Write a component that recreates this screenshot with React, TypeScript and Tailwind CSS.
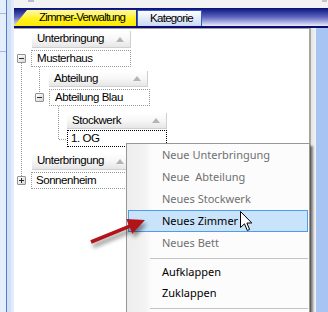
import React from 'react';

type HeaderProps = { label: string; className: string };

function ColumnHeader({ label, className }: HeaderProps) {
  return (
    <div
      className={`flex items-center justify-between pl-[5px] pr-[6px] bg-linear-to-b from-white via-[#f7f7f7] to-[#e6e6e6] border-b border-r border-[#d0d0d0] text-[11.5px] tracking-[-0.45px] text-black ${className}`}
    >
      <span>{label}</span>
      <svg width="8" height="5" viewBox="0 0 8 5" className="shrink-0">
        <path d="M0 5 L4 0 L8 5 Z" fill="#b4b4b4" />
      </svg>
    </div>
  );
}

function Expander({ open }: { open: boolean }) {
  return (
    <div className="relative w-[9px] h-[9px] border border-[#939393] bg-linear-to-br from-white to-[#d6d6d6] rounded-[1px] flex items-center justify-center shrink-0">
      <div className="w-[5px] h-px bg-[#2a2a2a]" />
      {!open && <div className="absolute w-px h-[5px] bg-[#2a2a2a]" />}
    </div>
  );
}

type MenuItemProps = { label: string; disabled?: boolean; active?: boolean; h?: string };

function MenuItem({ label, disabled, active, h = 'h-[22px]' }: MenuItemProps) {
  return (
    <div className={`${h} px-px flex`}>
      <div
        className={`flex-1 flex items-center pl-[33px] whitespace-pre ${
          active ? 'bg-[#c9e3fb] border border-[#4e9cee]' : 'border border-transparent'
        } ${disabled ? 'text-[#707070]' : 'text-black'}`}
      >
        {label}
      </div>
    </div>
  );
}

function Separator({ h }: { h: string }) {
  return (
    <div className={`${h} pl-[23px] pr-px`}>
      <div className="mt-[4px] h-px bg-[#c4c4c4]" />
    </div>
  );
}

export default function App() {
  return (
    <div className="relative w-[328px] h-[312px] overflow-hidden bg-white font-['Liberation_Sans',Arial,sans-serif] select-none">
      <div className="flex h-full">
        {/* left dock strip */}
        <div className="w-[14px] h-full flex shrink-0">
          <div className="w-[6px] h-full bg-[#e5eefb] flex flex-col">
            <div className="h-[13px]" />
            <div className="h-px bg-[#9fb9e4]" />
            <div className="h-[37px]" />
            <div className="h-px bg-[#9fb9e4]" />
          </div>
          <div className="w-px h-full bg-[#4f7fcf]" />
          <div className="w-[4px] h-full bg-[#d3e1f6]" />
          <div className="w-[3px] h-full bg-[#e2ebfa]" />
        </div>

        <div className="flex-1 flex flex-col">
          {/* top strip */}
          <div className="h-[8px] bg-[#f3f3f3] flex items-start">
            <div className="ml-[14px] w-[6px] h-[2px] bg-[#b8b8d8]" />
            <div className="ml-auto mr-[1px] w-[5px] h-[2px] bg-[#c4c4c4]" />
          </div>

          {/* tab strip */}
          <div className="h-[20px] bg-linear-to-b from-[#0a0a7a] via-[#5f63bd] to-[#eceef8] border-b-2 border-[#0b0b72] flex items-end">
            <div className="w-[123px] h-[16px] bg-linear-to-b from-[#fff9a0] via-[#fff21a] to-[#ffe900] border-r border-[#23307a] [clip-path:polygon(13px_0,100%_0,100%_100%,0_100%)] flex items-center pl-[25px] text-[11.5px] tracking-[-0.8px] text-black">
              Zimmer-Verwaltung
            </div>
            <div className="w-[65px] h-[16px] bg-linear-to-b from-white to-[#c9d8f3] border border-b-0 border-[#2f5ccb] flex items-center pl-[12px] text-[11.5px] tracking-[-0.7px] text-black">
              Kategorie
            </div>
          </div>

          <div className="flex-1 flex">
            {/* tree panel */}
            <div className="relative w-[297px] border-t border-[#a0a0a0] border-r-2 border-r-[#a6a6a6] bg-white flex flex-col">
              <svg className="absolute left-0 top-0 pointer-events-none" width="120" height="170">
                <g stroke="#9a9a9a" strokeWidth="1" strokeDasharray="1 1" shapeRendering="crispEdges" fill="none">
                  <line x1="7.5" y1="34" x2="7.5" y2="147" />
                  <line x1="25.5" y1="38" x2="25.5" y2="64" />
                  <polyline points="44.5,77 44.5,110.5 53,110.5" />
                </g>
              </svg>

              <ColumnHeader label="Unterbringung" className="mt-[2px] ml-[18px] w-[99px] h-[17px]" />
              <div className="mt-[2px] flex items-center">
                <div className="ml-[3px]">
                  <Expander open />
                </div>
                <div className="ml-[5px] w-[100px] h-[17px] border border-dotted border-[#9a9a9a] flex items-center pl-[5px] text-[11.5px] tracking-[-0.45px]">
                  Musterhaus
                </div>
              </div>

              <ColumnHeader label="Abteilung" className="mt-[4px] ml-[35px] w-[99px] h-[16px]" />
              <div className="mt-[2px] flex items-center">
                <div className="ml-[21px]">
                  <Expander open />
                </div>
                <div className="ml-[5px] w-[101px] h-[17px] border border-dotted border-[#9a9a9a] flex items-center pl-[5px] text-[11.5px] tracking-[-0.45px]">
                  Abteilung Blau
                </div>
              </div>

              <ColumnHeader label="Stockwerk" className="mt-[7px] ml-[53px] w-[100px] h-[16px]" />
              <div className="mt-px ml-[53px] w-[100px] h-[17px] border border-dotted border-black flex items-center pl-[3px] text-[11.5px] tracking-[-0.45px]">
                1. OG
              </div>

              <ColumnHeader label="Unterbringung" className="mt-[6px] ml-[18px] w-[99px] h-[17px]" />
              <div className="mt-[2px] flex items-center">
                <div className="ml-[3px]">
                  <Expander open={false} />
                </div>
                <div className="ml-[5px] w-[100px] h-[17px] border border-dotted border-[#9a9a9a] flex items-center pl-[4px] text-[11.5px] tracking-[-0.45px]">
                  Sonnenheim
                </div>
              </div>
            </div>
            <div className="w-[5px] bg-linear-to-r from-[#e4e4e4] to-[#f2f2f2]" />
            <div className="flex-1 bg-[#a8c4f2]" />
          </div>
        </div>
      </div>

      {/* context menu */}
      <div className="absolute left-[126px] top-[143px] w-[184px] h-[190px] border border-[#979797] bg-[linear-gradient(to_right,#ededed_0px,#f3f3f3_18px,#fcfcfc_25px)] shadow-[3px_3px_2px_rgba(0,0,0,0.45)] font-['Noto_Sans',sans-serif] text-[11px] flex flex-col">
        <MenuItem label="Neue Unterbringung" disabled />
        <MenuItem label="Neue  Abteilung" disabled />
        <MenuItem label="Neues Stockwerk" disabled />
        <MenuItem label="Neues Zimmer" active />
        <MenuItem label="Neues Bett" disabled />
        <Separator h="h-[8px]" />
        <MenuItem label="Aufklappen" h="h-[21px]" />
        <MenuItem label="Zuklappen" h="h-[21px]" />
        <Separator h="h-[8px]" />
      </div>

      {/* mouse cursor */}
      <svg className="absolute left-[240px] top-[211px] pointer-events-none" width="13" height="21" viewBox="0 0 13 21">
        <path d="M0.5 0.5 V16.5 L4.5 12.8 L7.3 19.5 L9.6 18.5 L6.9 12 H11.8 Z" fill="white" stroke="black" strokeWidth="1" strokeLinejoin="round" />
      </svg>

      {/* red annotation arrow */}
      <svg className="absolute left-0 top-0 pointer-events-none drop-shadow-[2px_4px_2px_rgba(0,0,0,0.45)]" width="328" height="312">
        <polygon
          points="90.3,240.3 128.6,224.7 126.3,219 145,220 132.3,233.8 130,228.1 91.7,243.7"
          fill="#b3141a"
        />
      </svg>
    </div>
  );
}
